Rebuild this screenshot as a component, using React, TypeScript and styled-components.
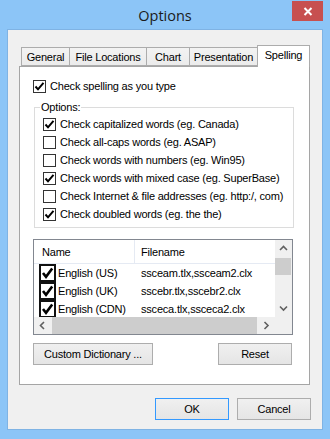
import styled, { createGlobalStyle } from "styled-components";

const GlobalStyle = createGlobalStyle`
  html, body {
    margin: 0;
    padding: 0;
  }
  body {
    width: 330px;
    height: 439px;
    overflow: hidden;
    font-family: "Liberation Sans", Arial, sans-serif;
    font-size: 11px;
    letter-spacing: -0.2px;
    color: #000;
  }
`;

const Window = styled.div`
  width: 330px;
  height: 439px;
  box-sizing: border-box;
  background: #8cc5f7;
  display: flex;
  flex-direction: column;
  padding: 0 7px 9px 7px;
`;

const TitleBar = styled.div`
  position: relative;
  height: 29px;
  display: flex;
  align-items: center;
  justify-content: center;
  margin: 0 -7px;
`;

const Title = styled.div`
  font-family: "Open Sans", "Noto Sans", sans-serif;
  font-size: 14.5px;
  letter-spacing: 0;
  color: #1b1b1b;
  margin-top: 1px;
`;

const CloseButton = styled.div`
  position: absolute;
  top: 1px;
  right: 7px;
  width: 31px;
  height: 20px;
  background: #c75050;
  display: flex;
  align-items: center;
  justify-content: center;
`;

const Client = styled.div`
  flex: 1;
  background: #f0f0f0;
  border: 1px solid #7fb3e4;
  display: flex;
  flex-direction: column;
  padding: 15px 11px 0 11px;
`;

const TabStrip = styled.div`
  display: flex;
  align-items: flex-end;
  height: 21px;
  padding-left: 2px;
  position: relative;
  z-index: 1;
`;

const Tab = styled.div<{ $width: number; $active?: boolean }>`
  box-sizing: border-box;
  width: ${({ $width }) => $width}px;
  height: ${({ $active }) => ($active ? 22 : 19)}px;
  margin-left: -1px;
  margin-bottom: ${({ $active }) => ($active ? -1 : 0)}px;
  border: 1px solid #acacac;
  border-bottom: ${({ $active }) => ($active ? "none" : "1px solid #acacac")};
  background: ${({ $active }) => ($active ? "#fff" : "linear-gradient(#f3f3f3, #ebebeb)")};
  display: flex;
  align-items: center;
  justify-content: center;
  padding-bottom: ${({ $active }) => ($active ? 3 : 0)}px;
  position: relative;
  z-index: ${({ $active }) => ($active ? 2 : 1)};
  &:first-child {
    margin-left: 0;
  }
`;

const Panel = styled.div`
  box-sizing: border-box;
  width: 291px;
  height: 319px;
  background: #fff;
  border: 1px solid #a5a5a5;
  padding: 10px 0 0 13px;
  display: flex;
  flex-direction: column;
`;

const CheckRow = styled.label`
  display: flex;
  align-items: center;
  gap: 4px;
  height: 18px;
  white-space: nowrap;
`;

const Box = styled.span`
  box-sizing: border-box;
  width: 13px;
  height: 13px;
  border: 1px solid #333;
  background: #fff;
  display: flex;
  align-items: center;
  justify-content: center;
  flex: none;
`;

const Group = styled.fieldset`
  box-sizing: border-box;
  width: 260px;
  margin: 6px 0 0 1px;
  padding: 1px 0 4px 8px;
  border: 1px solid #dcdcdc;
  min-width: 0;
`;

const Legend = styled.legend`
  padding: 0 1px;
  margin-left: -3px;
  line-height: 13px;
`;

const ListView = styled.div`
  box-sizing: border-box;
  width: 260px;
  height: 96px;
  margin-top: 11px;
  border: 1px solid #828790;
  display: grid;
  grid-template-columns: 1fr 17px;
  grid-template-rows: 1fr 17px;
  overflow: hidden;
`;

const ListBody = styled.div`
  overflow: hidden;
`;

const ListHeader = styled.div`
  display: flex;
  height: 23px;
  border-bottom: 1px solid #e5eaf3;
`;

const HeaderCell = styled.div<{ $width?: number }>`
  box-sizing: border-box;
  width: ${({ $width }) => ($width ? `${$width}px` : "auto")};
  flex: ${({ $width }) => ($width ? "none" : 1)};
  display: flex;
  align-items: center;
  padding-left: ${({ $width }) => ($width ? 8 : 6)}px;
  border-right: ${({ $width }) => ($width ? "1px solid #e5eaf3" : "none")};
`;

const ListRow = styled.div`
  display: flex;
  height: 18px;
  align-items: center;
  white-space: nowrap;
`;

const NameCell = styled.div`
  width: 107px;
  flex: none;
  display: flex;
  align-items: center;
  gap: 2px;
  padding-left: 5px;
  box-sizing: border-box;
`;

const FileCell = styled.div`
  flex: 1;
`;

const RowBox = styled.span`
  box-sizing: border-box;
  width: 17px;
  height: 18px;
  border: 2px solid #111;
  background: #fff;
  display: flex;
  align-items: center;
  justify-content: center;
  flex: none;
  overflow: hidden;
`;

const ScrollBar = styled.div<{ $vertical?: boolean }>`
  background: #f0f0f0;
  display: flex;
  flex-direction: ${({ $vertical }) => ($vertical ? "column" : "row")};
`;

const ScrollArrow = styled.div`
  width: 17px;
  height: 17px;
  flex: none;
  display: flex;
  align-items: center;
  justify-content: center;
`;

const Track = styled.div<{ $vertical?: boolean }>`
  flex: 1;
  display: flex;
  flex-direction: ${({ $vertical }) => ($vertical ? "column" : "row")};
  padding: ${({ $vertical }) => ($vertical ? "1px 1px 0 0" : "0 1px 0 1px")};
`;

const Thumb = styled.div<{ $vertical?: boolean }>`
  background: #cdcdcd;
  ${({ $vertical }) => ($vertical ? "height: 17px;" : "flex: 1; height: 17px;")}
`;

const Corner = styled.div`
  background: #f0f0f0;
`;

const PanelButtons = styled.div`
  display: flex;
  justify-content: space-between;
  width: 259px;
  margin-top: 8px;
`;

const PushButton = styled.div<{ $width: number; $default?: boolean }>`
  box-sizing: border-box;
  width: ${({ $width }) => $width}px;
  height: 22px;
  border: 1px solid ${({ $default }) => ($default ? "#3399ff" : "#adadad")};
  background: linear-gradient(#f0f0f0, #e5e5e5);
  display: flex;
  align-items: center;
  justify-content: center;
`;

const DialogButtons = styled.div`
  display: flex;
  justify-content: flex-end;
  gap: 8px;
  margin-top: 13px;
`;

const Tick = () => (
  <svg width="11" height="11" viewBox="0 0 11 11">
    <path d="M1.5 5.5 L4 8.3 L9.5 1.8" stroke="#000" strokeWidth="2" fill="none" />
  </svg>
);

const BigTick = () => (
  <svg width="13" height="14" viewBox="0 0 13 14">
    <path d="M2 7 L5 10.8 L11.2 2.5" stroke="#000" strokeWidth="2.6" fill="none" />
  </svg>
);

const Chevron = ({ dir }: { dir: "up" | "down" | "left" | "right" }) => {
  const d = {
    up: "M1 5 L4.5 1.5 L8 5",
    down: "M1 1.5 L4.5 5 L8 1.5",
    left: "M5 1 L1.5 4.5 L5 8",
    right: "M1.5 1 L5 4.5 L1.5 8",
  }[dir];
  const vertical = dir === "up" || dir === "down";
  return (
    <svg width={vertical ? 9 : 7} height={vertical ? 7 : 9} viewBox={vertical ? "0 0 9 7" : "0 0 7 9"}>
      <path d={d} stroke="#606060" strokeWidth="1.6" fill="none" />
    </svg>
  );
};

const CheckBox = ({ checked, label }: { checked: boolean; label: string }) => (
  <CheckRow>
    <Box>{checked && <Tick />}</Box>
    <span>{label}</span>
  </CheckRow>
);

const tabs = [
  { label: "General", width: 49 },
  { label: "File Locations", width: 78 },
  { label: "Chart", width: 44 },
  { label: "Presentation", width: 69 },
  { label: "Spelling", width: 53, active: true },
];

const options = [
  { label: "Check capitalized words (eg. Canada)", checked: true },
  { label: "Check all-caps words (eg. ASAP)", checked: false },
  { label: "Check words with numbers (eg. Win95)", checked: false },
  { label: "Check words with mixed case (eg. SuperBase)", checked: true },
  { label: "Check Internet & file addresses (eg. http:/, com)", checked: false },
  { label: "Check doubled words (eg. the the)", checked: true },
];

const dictionaries = [
  { name: "English (US)", file: "ssceam.tlx,ssceam2.clx" },
  { name: "English (UK)", file: "sscebr.tlx,sscebr2.clx" },
  { name: "English (CDN)", file: "ssceca.tlx,ssceca2.clx" },
];

export default function App() {
  return (
    <>
      <GlobalStyle />
      <Window>
        <TitleBar>
          <Title>Options</Title>
          <CloseButton>
            <svg width="10" height="9" viewBox="0 0 10 9">
              <path d="M1.5 1 L8.5 8 M8.5 1 L1.5 8" stroke="#fff" strokeWidth="2" />
            </svg>
          </CloseButton>
        </TitleBar>
        <Client>
          <TabStrip>
            {tabs.map((t) => (
              <Tab key={t.label} $width={t.width} $active={t.active}>
                {t.label}
              </Tab>
            ))}
          </TabStrip>
          <Panel>
            <CheckBox checked label="Check spelling as you type" />
            <Group>
              <Legend>Options:</Legend>
              {options.map((o) => (
                <CheckBox key={o.label} checked={o.checked} label={o.label} />
              ))}
            </Group>
            <ListView>
              <ListBody>
                <ListHeader>
                  <HeaderCell $width={101}>Name</HeaderCell>
                  <HeaderCell>Filename</HeaderCell>
                </ListHeader>
                {dictionaries.map((d) => (
                  <ListRow key={d.name}>
                    <NameCell>
                      <RowBox>
                        <BigTick />
                      </RowBox>
                      {d.name}
                    </NameCell>
                    <FileCell>{d.file}</FileCell>
                  </ListRow>
                ))}
              </ListBody>
              <ScrollBar $vertical>
                <ScrollArrow>
                  <Chevron dir="up" />
                </ScrollArrow>
                <Track $vertical>
                  <Thumb $vertical />
                </Track>
                <ScrollArrow>
                  <Chevron dir="down" />
                </ScrollArrow>
              </ScrollBar>
              <ScrollBar>
                <ScrollArrow>
                  <Chevron dir="left" />
                </ScrollArrow>
                <Track>
                  <Thumb />
                </Track>
                <ScrollArrow>
                  <Chevron dir="right" />
                </ScrollArrow>
              </ScrollBar>
              <Corner />
            </ListView>
            <PanelButtons>
              <PushButton $width={120}>Custom Dictionary ...</PushButton>
              <PushButton $width={74}>Reset</PushButton>
            </PanelButtons>
          </Panel>
          <DialogButtons>
            <PushButton $width={74} $default>
              OK
            </PushButton>
            <PushButton $width={74}>Cancel</PushButton>
          </DialogButtons>
        </Client>
      </Window>
    </>
  );
}
